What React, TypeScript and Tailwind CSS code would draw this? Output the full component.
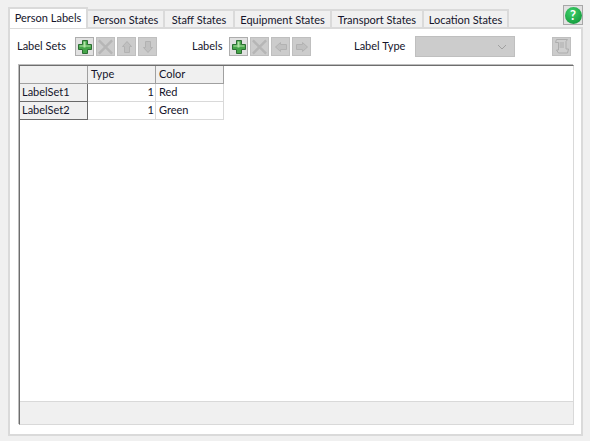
const tabs = [
  { label: "Person States", width: "w-[77px]" },
  { label: "Staff States", width: "w-[70px]" },
  { label: "Equipment States", width: "w-[97px]" },
  { label: "Transport States", width: "w-[92px]" },
  { label: "Location States", width: "w-[85px]" },
];

const PlusIcon = () => (
  <svg width="16" height="16" viewBox="0 0 16 16">
    <path d="M5.500 1.500h5v4h4v5h-4v4h-5v-4h-4v-5h4z" fill="#45a548" stroke="#2c6e33" />
    <path d="M6.500 2.500h2v4h5v1h-5v1h-2v-1h-4v-1h4z" fill="#b4e3a8" />
  </svg>
);

const CrossIcon = () => (
  <svg width="18" height="18" viewBox="0 0 18 18">
    <path d="M2 2l14 14M16 2L2 16" stroke="#b6b6b6" strokeWidth="2.500" />
  </svg>
);

const ArrowIcon = ({ rotate }: { rotate: string }) => (
  <svg width="16" height="16" viewBox="0 0 16 16" className={rotate}>
    <path d="M8 2.500l4.500 5H10.500v6h-5v-6H3.500z" fill="#c0c0c0" stroke="#b2b2b2" />
  </svg>
);

const ScrollIcon = () => (
  <svg width="17" height="17" viewBox="0 0 17 17">
    <path d="M3.500 1.500h11l-1.500 2v7.500h2.500l-1 4h-9l-2-3h2V4.500h-3z" fill="#cfcfcf" stroke="#adadad" />
    <path d="M6.500 5h4.500M6.500 7h4.500M6.500 9h4.500" stroke="#adadad" />
  </svg>
);

const ToolButton = ({ enabled, children }: { enabled?: boolean; children: React.ReactNode }) => (
  <div
    className={`w-[19px] h-[19px] flex items-center justify-center border ${
      enabled ? "bg-[#e1e1e1] border-[#adadad]" : "bg-[#cccccc] border-[#bfbfbf]"
    }`}
  >
    {children}
  </div>
);

const headCell = "bg-[#f0f0f0] border-r border-b border-[#a0a0a0] px-[3px] h-[18px] leading-[15px]";
const rowHead = "bg-[#f0f0f0] border-r border-b border-[#696969] px-[2px] h-[18px] leading-[15px]";
const cell = "bg-white border-r border-b border-[#d9d9d9] px-[3px] h-[18px] leading-[15px]";

const rows = [
  { name: "LabelSet1", type: 1, color: "Red" },
  { name: "LabelSet2", type: 1, color: "Green" },
];

export default function App() {
  return (
    <div className="w-[590px] h-[441px] bg-[#f0f0f0] pt-[7px] pl-2 text-[11px] text-[#14142b] overflow-hidden whitespace-nowrap font-['Lato','Noto_Sans',sans-serif]">
      <div className="flex items-end justify-between h-[20px] w-[575px]">
        <div className="flex items-end">
          <div className="w-[80px] h-[21px] bg-white border-t-2 border-l-2 border-r-2 border-[#dadada] text-center leading-[17px] relative top-px">
            Person Labels
          </div>
          {tabs.map((t) => (
            <div
              key={t.label}
              className={`${t.width} h-[18px] bg-[#f0f0f0] border-t-2 border-r-2 border-[#dadada] text-center leading-[17px]`}
            >
              {t.label}
            </div>
          ))}
        </div>
        <div className="w-[20px] h-[20px] mb-[2px] bg-[#e1e1e1] border border-[#a8a8a8] flex items-center justify-center">
          <div className="w-[17px] h-[17px] rounded-full bg-[radial-gradient(circle_at_40%_30%,#3fd06a,#0a8f32)] text-white text-[13px] font-bold leading-[17px] text-center">
            ?
          </div>
        </div>
      </div>

      <div className="w-[575px] h-[409px] bg-white border-2 border-[#dadada] pt-[7px] pl-[7px]">
        <div className="flex items-center h-[21px]">
          <span className="w-[58px]">Label Sets</span>
          <div className="flex gap-[2px]">
            <ToolButton enabled><PlusIcon /></ToolButton>
            <ToolButton><CrossIcon /></ToolButton>
            <ToolButton><ArrowIcon rotate="" /></ToolButton>
            <ToolButton><ArrowIcon rotate="rotate-180" /></ToolButton>
          </div>
          <span className="ml-[35px] w-[37px]">Labels</span>
          <div className="flex gap-[2px]">
            <ToolButton enabled><PlusIcon /></ToolButton>
            <ToolButton><CrossIcon /></ToolButton>
            <ToolButton><ArrowIcon rotate="-rotate-90" /></ToolButton>
            <ToolButton><ArrowIcon rotate="rotate-90" /></ToolButton>
          </div>
          <span className="ml-[43px] w-[61px]">Label Type</span>
          <div className="w-[100px] h-[21px] bg-[#cccccc] border border-[#bfbfbf] flex items-center justify-end pr-[7px]">
            <svg width="10" height="6" viewBox="0 0 10 6">
              <path d="M1 1l4 4 4-4" fill="none" stroke="#a0a0a0" />
            </svg>
          </div>
          <div className="ml-[37px]">
            <ToolButton><ScrollIcon /></ToolButton>
          </div>
        </div>

        <div className="mt-[8px] ml-[2px] w-[555px] h-[360px] bg-white border-t border-l border-[#6e6e6e] border-r border-r-[#d9d9d9] border-b border-b-[#d9d9d9] shadow-[-1px_-1px_0_#bdbdbd] flex flex-col">
          <div className="flex-1">
            <div className="grid grid-cols-[68px_68px_68px] w-[204px]">
              <div className={headCell} />
              <div className={headCell}>Type</div>
              <div className={headCell}>Color</div>
              {rows.map((r) => (
                <div key={r.name} className="contents">
                  <div className={rowHead}>{r.name}</div>
                  <div className={`${cell} text-right !pr-[1px]`}>{r.type}</div>
                  <div className={cell}>{r.color}</div>
                </div>
              ))}
            </div>
          </div>
          <div className="h-[23px] bg-[#f0f0f0] border-t border-[#d9d9d9]" />
        </div>
      </div>
    </div>
  );
}
